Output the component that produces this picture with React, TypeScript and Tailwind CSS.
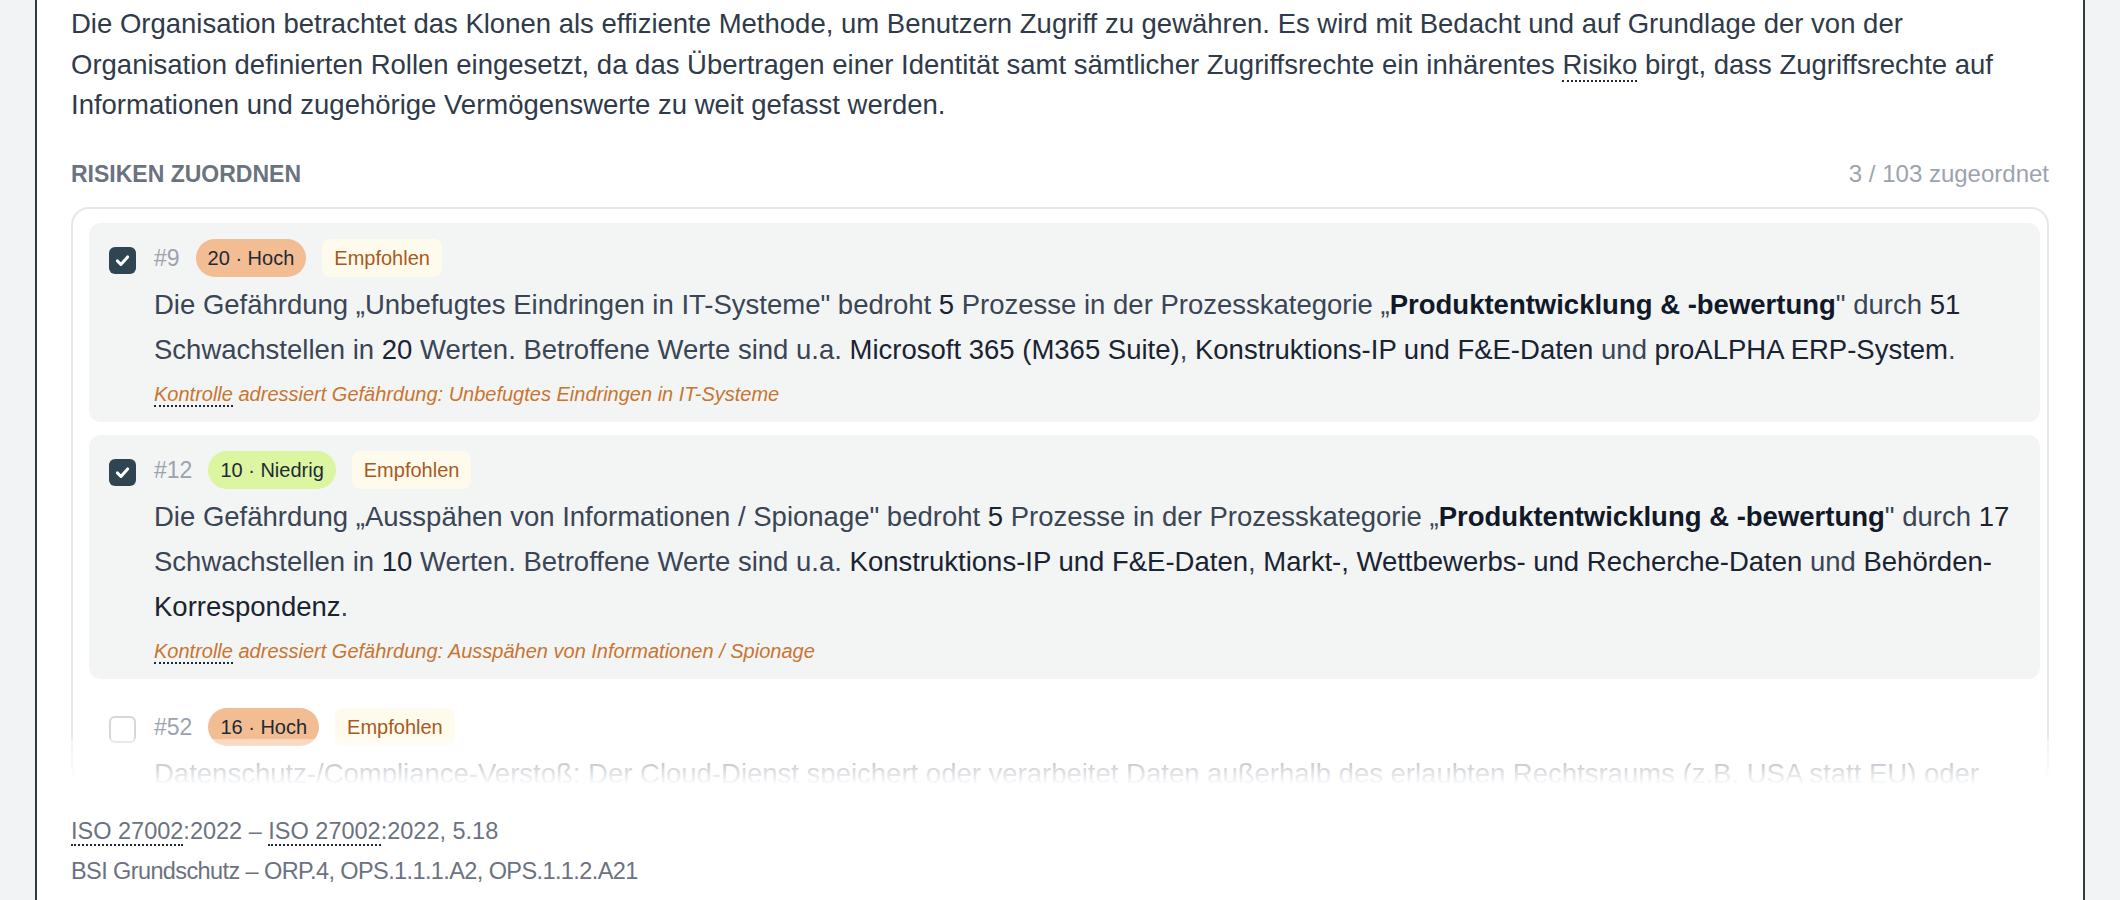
import React from "react";

function Check() {
  return (
    <svg viewBox="0 0 24 24" className="h-[19px] w-[19px]" fill="none" stroke="white" strokeWidth={3.8} strokeLinecap="round" strokeLinejoin="round">
      <polyline points="5.5 12.5 10 17 18.5 7.5" />
    </svg>
  );
}

function Dotted({ children }: { children: React.ReactNode }) {
  return <span className="border-b-2 border-dotted border-[#1f2937]">{children}</span>;
}

type Item = {
  id: string;
  score: string;
  level: "hoch" | "niedrig";
  checked: boolean;
  desc: React.ReactNode;
  control?: string;
};

const B = ({ children }: { children: React.ReactNode }) => (
  <span className="font-bold text-[#111827]">{children}</span>
);
const M = ({ children }: { children: React.ReactNode }) => (
  <span className="text-[#1a2332]">{children}</span>
);

const items: Item[] = [
  {
    id: "#9",
    score: "20 · Hoch",
    level: "hoch",
    checked: true,
    desc: (
      <>
        Die Gefährdung „Unbefugtes Eindringen in IT-Systeme" bedroht <M>5</M> Prozesse in der Prozesskategorie „
        <B>Produktentwicklung &amp; -bewertung</B>" durch <M>51</M> Schwachstellen in <M>20</M> Werten. Betroffene Werte
        sind u.a. <M>Microsoft 365 (M365 Suite)</M>, <M>Konstruktions-IP und F&amp;E-Daten</M> und{" "}
        <M>proALPHA ERP-System</M>.
      </>
    ),
    control: "Unbefugtes Eindringen in IT-Systeme",
  },
  {
    id: "#12",
    score: "10 · Niedrig",
    level: "niedrig",
    checked: true,
    desc: (
      <>
        Die Gefährdung „Ausspähen von Informationen / Spionage" bedroht <M>5</M> Prozesse in der Prozesskategorie „
        <B>Produktentwicklung &amp; -bewertung</B>" durch <M>17</M> Schwachstellen in <M>10</M> Werten. Betroffene Werte
        sind u.a. <M>Konstruktions-IP und F&amp;E-Daten</M>, <M>Markt-, Wettbewerbs- und Recherche-Daten</M> und{" "}
        <M>Behörden-</M>
        <M>Korrespondenz</M>.
      </>
    ),
    control: "Ausspähen von Informationen / Spionage",
  },
  {
    id: "#52",
    score: "16 · Hoch",
    level: "hoch",
    checked: false,
    desc: (
      <>
        Datenschutz-/Compliance-Verstoß: Der Cloud-Dienst speichert oder verarbeitet Daten außerhalb des erlaubten
        Rechtsraums (z.B. USA statt EU) oder verletzt anderweitig regulatorische Vorgaben, was zu Bußgeldern und
        Reputationsschäden führen kann.
      </>
    ),
  },
];

function RiskItem({ item }: { item: Item }) {
  return (
    <div
      className={
        item.checked
          ? "flex shrink-0 gap-[18px] rounded-[12px] bg-[#f3f4f4] pl-[20px] pr-[12px] pt-[16px] pb-[13px]"
          : "flex shrink-0 gap-[18px] rounded-[12px] bg-white pl-[20px] pr-[12px] pt-[16px] pb-[13px]"
      }
    >
      {item.checked ? (
        <div className="mt-[8px] flex h-[27px] w-[27px] shrink-0 items-center justify-center rounded-[6px] bg-[#2f4552]">
          <Check />
        </div>
      ) : (
        <div className="mt-[8px] h-[27px] w-[27px] shrink-0 rounded-[6px] border-2 border-[#d4d7dc] bg-white" />
      )}
      <div className="flex min-w-0 flex-1 flex-col">
        <div className="flex h-[38px] items-center gap-[16px]">
          <span className="text-[23px] leading-[30px] text-[#9ca3af]">{item.id}</span>
          <span
            className={
              item.level === "hoch"
                ? "rounded-full bg-[#f2bd92] px-[12px] py-[4px] text-[20px] leading-[30px] text-[#1f2937]"
                : "rounded-full bg-[#dcf5a1] px-[12px] py-[4px] text-[20px] leading-[30px] text-[#1f2937]"
            }
          >
            {item.score}
          </span>
          <span className="rounded-[8px] bg-[#fefaec] px-[12px] py-[4px] text-[20px] leading-[30px] text-[#a85a1e]">
            Empfohlen
          </span>
        </div>
        <p className="mt-[5px] text-[27.5px] leading-[45px] text-[#3a4555]">{item.desc}</p>
        {item.control && (
          <p className="mt-[7px] text-[20px] italic leading-[30px] text-[#c97532]">
            <Dotted>Kontrolle</Dotted> adressiert Gefährdung: {item.control}
          </p>
        )}
      </div>
    </div>
  );
}

export default function App() {
  return (
    <div className="flex min-h-screen bg-[#f1f3f5] px-[35px] font-['Liberation_Sans',Arial,sans-serif]">
      <div className="flex-1 border-x-2 border-[#2d3b48] bg-white px-[34px] pt-[4px] pb-[40px]">
        <p className="text-[27.5px] leading-[40.5px] text-[#2f3a4a]">
          Die Organisation betrachtet das Klonen als effiziente Methode, um Benutzern Zugriff zu gewähren. Es wird mit
          Bedacht und auf Grundlage der von der Organisation definierten Rollen eingesetzt, da das Übertragen einer
          Identität samt sämtlicher Zugriffsrechte ein inhärentes <Dotted>Risiko</Dotted> birgt, dass Zugriffsrechte auf
          Informationen und zugehörige Vermögenswerte zu weit gefasst werden.
        </p>

        <div className="mt-[33px] flex items-center justify-between">
          <span className="text-[23px] font-semibold uppercase leading-[30px] text-[#6b7280]">Risiken zuordnen</span>
          <span className="text-[24px] leading-[30px] text-[#9ca3af]">3 / 103 zugeordnet</span>
        </div>

        <div className="relative mt-[18px]">
          <div className="flex h-[578px] flex-col gap-[13px] overflow-hidden rounded-[18px] border-2 border-[#e6e8eb] pl-[16px] pr-[7px] pt-[14px]">
            {items.map((it) => (
              <RiskItem key={it.id} item={it} />
            ))}
          </div>
          <div className="pointer-events-none absolute inset-x-0 bottom-0 h-[46px] bg-linear-to-b from-white/40 to-white" />
        </div>

        <div className="mt-[26px] text-[23.5px] leading-[40px] text-[#6b7280]">
          <div>
            <Dotted>ISO 27002</Dotted>:2022 – <Dotted>ISO 27002</Dotted>:2022, 5.18
          </div>
          <div className="tracking-[-0.6px]">BSI Grundschutz – ORP.4, OPS.1.1.1.A2, OPS.1.1.2.A21</div>
        </div>
      </div>
    </div>
  );
}
